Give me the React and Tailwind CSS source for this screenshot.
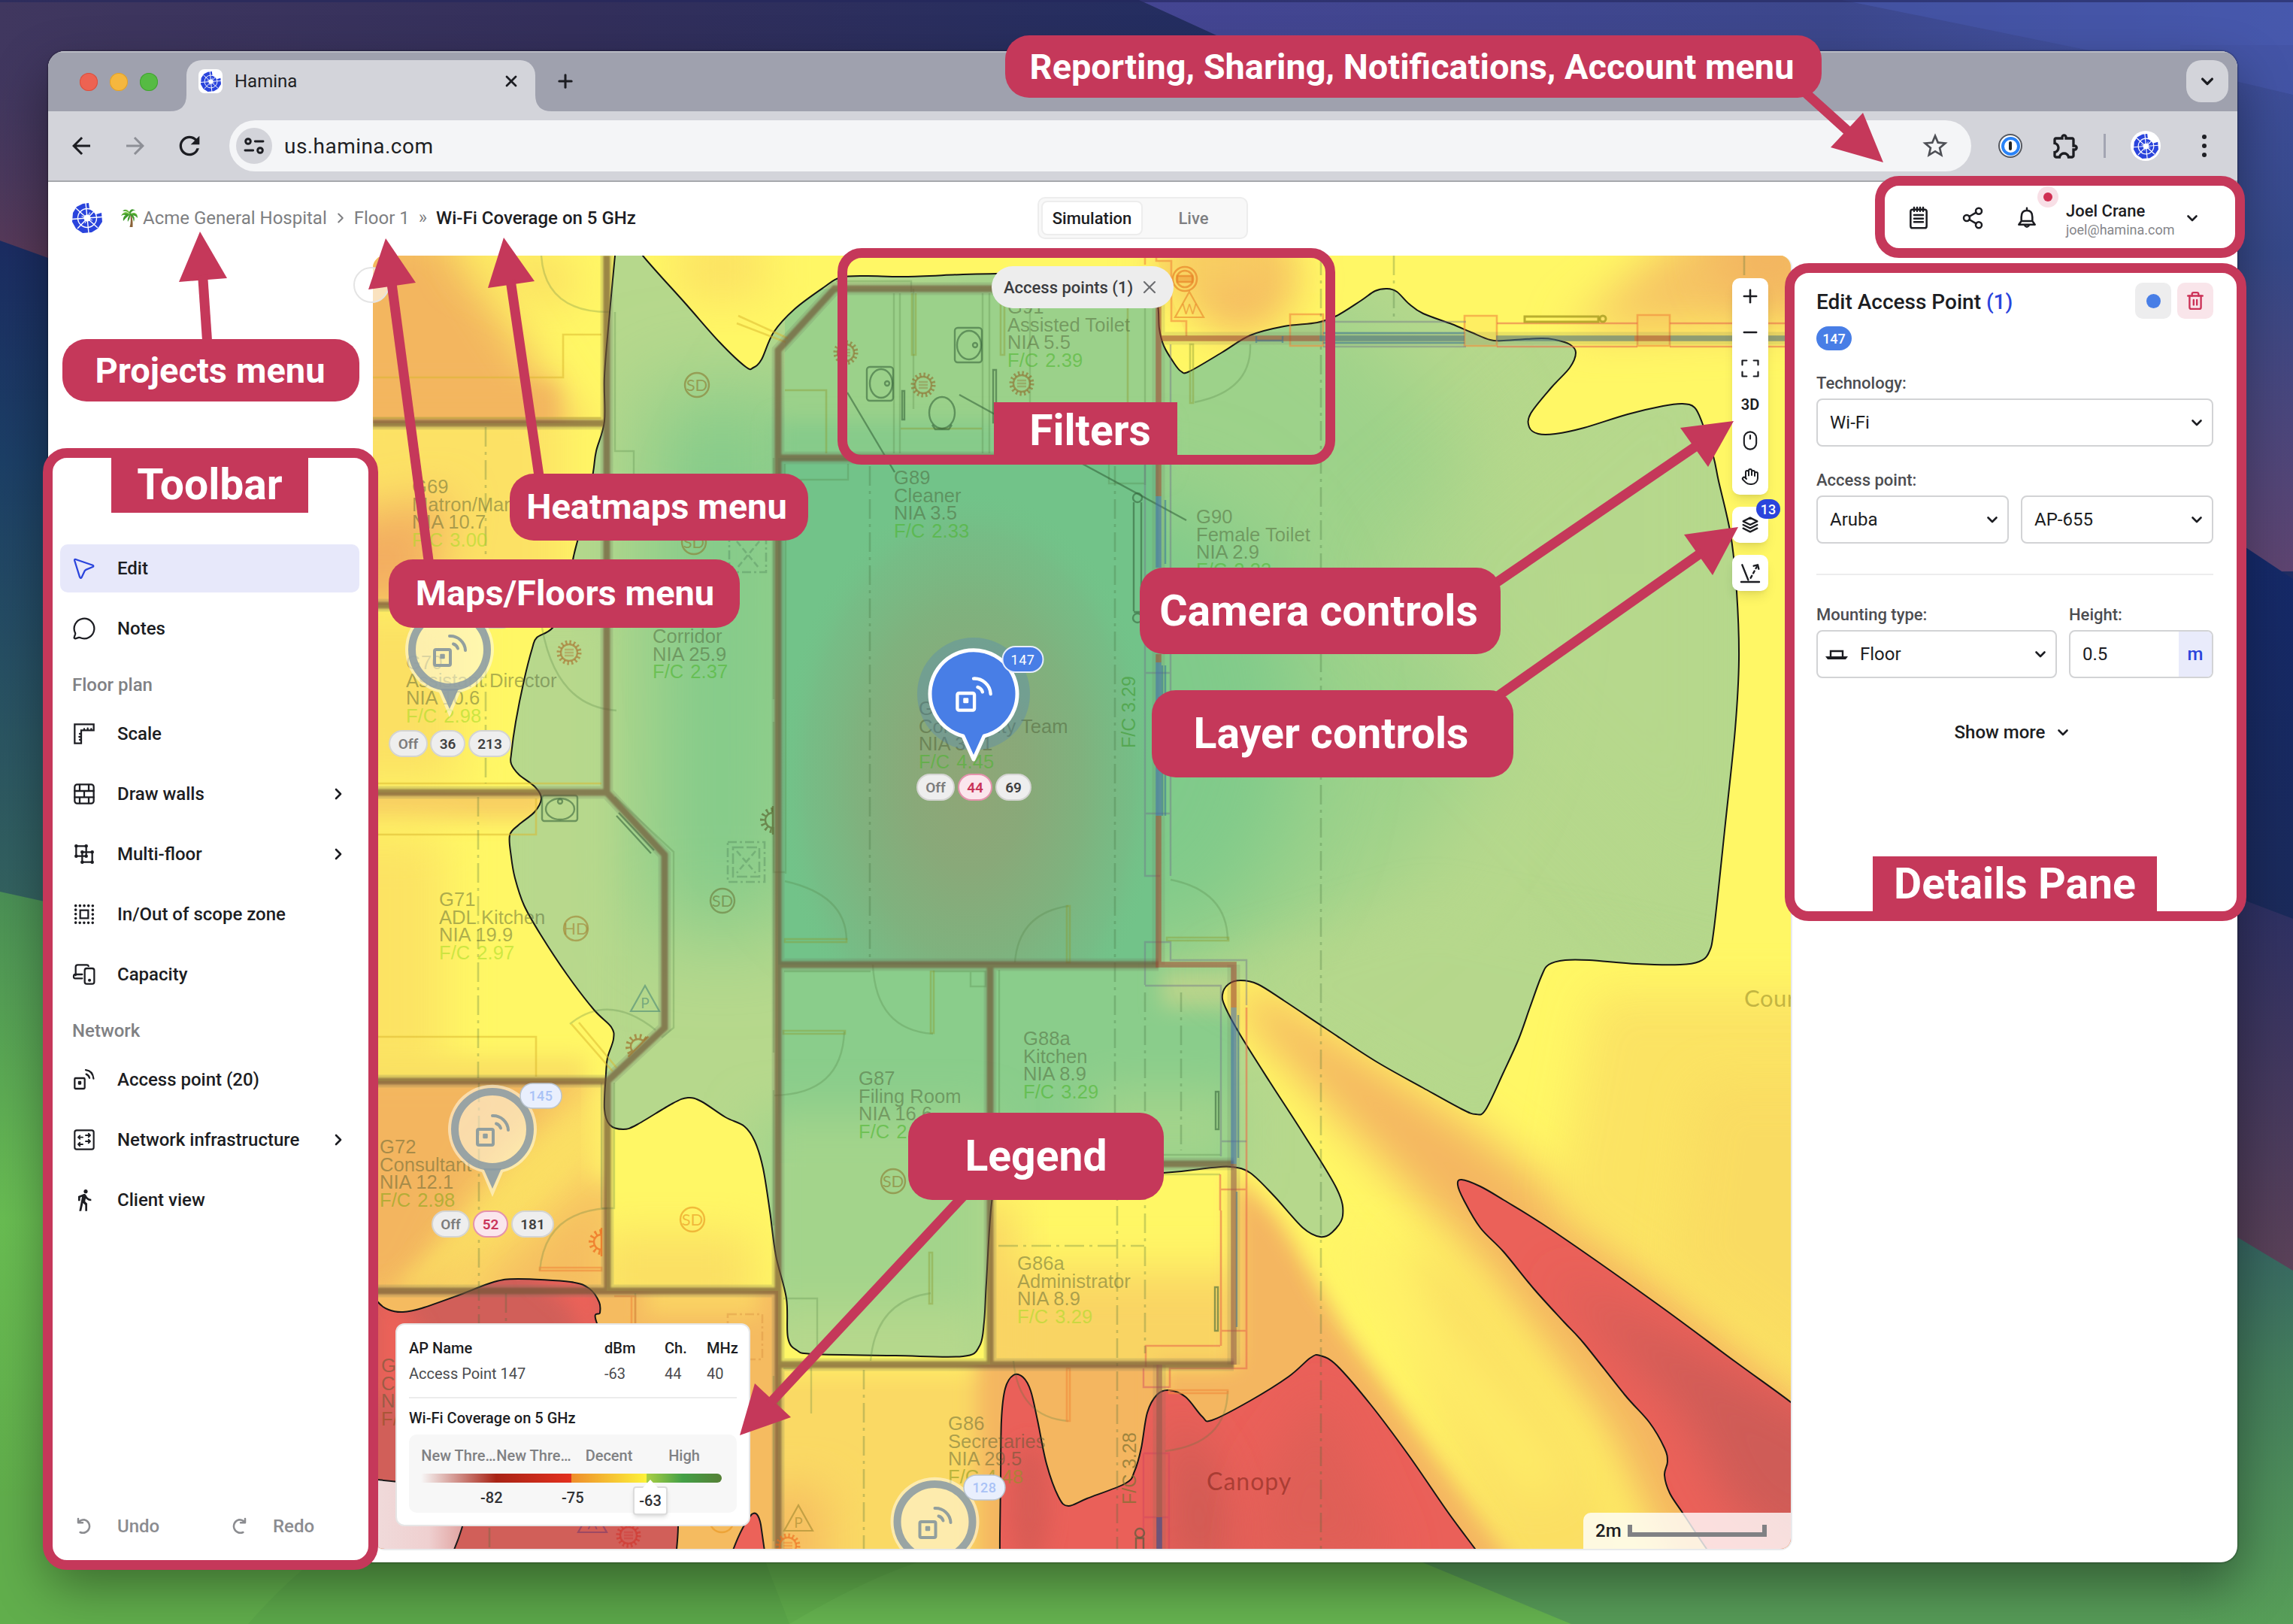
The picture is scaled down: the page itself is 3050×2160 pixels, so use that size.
import React from "react";
import { Plus, Minus, Mouse, Hand, Trash2, X, Share2, MessageCircle } from "lucide-react";
import { MdArrowBack, MdArrowForward, MdRefresh, MdStarOutline, MdOutlineExtension, MdDirectionsWalk } from "react-icons/md";
import { TbStack2 } from "react-icons/tb";

/* ---------- geometry helpers ---------- */

// Smooth curve through a list of points (Catmull-Rom converted to cubic Beziers).
function smooth(points, closed) {
  const n = points.length;
  const at = (i) => (closed ? points[(i + n) % n] : points[Math.max(0, Math.min(n - 1, i))]);
  let d = `M${points[0][0]} ${points[0][1]}`;
  const last = closed ? n : n - 1;
  for (let i = 0; i < last; i++) {
    const [p0, p1, p2, p3] = [at(i - 1), at(i), at(i + 1), at(i + 2)];
    const k = 6;
    d += `C${p1[0] + (p2[0] - p0[0]) / k} ${p1[1] + (p2[1] - p0[1]) / k} ${p2[0] - (p3[0] - p1[0]) / k} ${p2[1] - (p3[1] - p1[1]) / k} ${p2[0]} ${p2[1]}`;
  }
  return closed ? d + "Z" : d;
}

const GREEN = smooth(
  [
    [820, 310], [818, 340], [811, 415], [804, 500], [804, 560], [793, 600], [789, 628], [780, 680], [768, 720], [761, 750], [755, 800], [735, 835],
    [714, 848], [708, 862], [697, 905], [686, 960], [680, 1003], [680, 1016], [690, 1030], [712, 1047], [720, 1062], [711, 1080], [690, 1097],
    [678, 1111], [680, 1140], [685, 1168], [697, 1204], [719, 1243], [754, 1296], [790, 1343], [813, 1366], [816, 1382], [808, 1407], [806, 1429],
    [804, 1475], [811, 1496], [829, 1502], [847, 1496], [894, 1468], [915, 1460], [933, 1465], [965, 1486], [990, 1498], [1004, 1518],
    [1015, 1554], [1024, 1611], [1032, 1670], [1046, 1727], [1048, 1779], [1060, 1796], [1083, 1801], [1191, 1803], [1281, 1804], [1303, 1790],
    [1309, 1758], [1312, 1706], [1319, 1600], [1330, 1575], [1400, 1565], [1547, 1560], [1612, 1553], [1638, 1552], [1663, 1560], [1695, 1591],
    [1733, 1633], [1756, 1645], [1772, 1639], [1786, 1617], [1778, 1581], [1733, 1507], [1689, 1439], [1650, 1377], [1630, 1340], [1626, 1323],
    [1634, 1309], [1650, 1304], [1673, 1309], [1708, 1331], [1765, 1369], [1829, 1411], [1893, 1447], [1944, 1475], [1963, 1482],
    [1976, 1476], [2000, 1426], [2020, 1382], [2035, 1340], [2050, 1299], [2060, 1283], [2082, 1277], [2114, 1277], [2177, 1282], [2235, 1283],
    [2260, 1279], [2273, 1267], [2280, 1234], [2295, 1095], [2308, 970], [2313, 877], [2310, 787], [2302, 711], [2286, 640], [2279, 607],
    [2264, 562], [2254, 542], [2238, 537], [2212, 540], [2165, 551], [2107, 569], [2069, 577], [2046, 577], [2034, 568], [2036, 550], [2063, 516], [2088, 489],
    [2096, 469], [2088, 458], [2069, 452], [2050, 450], [2000, 453], [1982, 452], [1957, 442], [1931, 431], [1893, 417], [1874, 404],
    [1858, 388], [1845, 384], [1829, 387], [1810, 400], [1778, 420], [1752, 429], [1708, 434], [1663, 446], [1625, 469], [1582, 494], [1571, 494],
    [1561, 482], [1548, 460], [1542, 437], [1540, 406], [1530, 375], [1500, 366], [1400, 363], [1325, 364], [1281, 365], [1204, 368], [1153, 367],
    [1118, 369], [1096, 382], [1057, 411], [1029, 442], [1013, 478], [1002, 489], [992, 488], [957, 455], [912, 404], [855, 340], [836, 310],
  ],
  true
);

const RED_BOTTOM = smooth(
  [
    [1330, 2080], [1330, 2040], [1331, 1967], [1332, 1889], [1337, 1847], [1348, 1829], [1361, 1832], [1371, 1850], [1380, 1889], [1392, 1947], [1408, 1991],
    [1421, 2003], [1446, 1993], [1497, 1973], [1509, 1957], [1518, 1926], [1526, 1879], [1539, 1855], [1555, 1849], [1577, 1858], [1599, 1884],
    [1612, 1889], [1663, 1863], [1714, 1831], [1743, 1806], [1756, 1803], [1778, 1816], [1823, 1868], [1874, 1936], [1925, 2010], [1962, 2060], [1980, 2085],
  ],
  false
);

const RED_RIGHT = smooth(
  [
    [2290, 2085], [2270, 2060], [2238, 2012], [2221, 1986], [2214, 1962], [2218, 1944], [2214, 1926], [2194, 1892], [2161, 1855], [2107, 1787], [2080, 1758],
    [2040, 1714], [2000, 1665], [1969, 1633], [1947, 1596], [1939, 1576], [1944, 1569], [1969, 1578], [2000, 1596], [2067, 1638], [2201, 1732],
    [2308, 1811], [2382, 1865], [2410, 1890],
  ],
  false
);

const RED_LEFT = smooth(
  [
    [480, 1700], [502, 1731], [517, 1742], [536, 1745], [561, 1740], [612, 1722], [657, 1705], [689, 1701], [759, 1705], [784, 1714], [797, 1732],
    [798, 1746], [794, 1760], [840, 1860], [900, 1960], [902, 2030], [898, 2080],
  ],
  false
);

const Label = ({ x, y, lines, last, tint = "#4bb52c", op = 0.58 }) => (
  <g fontFamily="Liberation Sans, Arial, sans-serif" fontSize="25.600">
    {lines.map((l, i) => (
      <text key={i} x={x} y={y + i * 23.5} fill="#46562e" fillOpacity={0.46}>{l}</text>
    ))}
    {last && <text x={x} y={y + lines.length * 23.5} fill={tint} fillOpacity={op} wordSpacing="2">{last}</text>}
  </g>
);

const Detector = ({ x, y, t = "SD", c = "#8a7a30" }) => (
  <g stroke={c} fill="none" strokeOpacity="0.6" strokeWidth="2.4">
    <circle cx={x} cy={y} r="16" />
    <text x={x} y={y + 8} textAnchor="middle" fontSize="22" fontFamily="Lato, sans-serif" stroke="none" fill={c} fillOpacity="0.6">{t}</text>
  </g>
);

const Sun = ({ x, y, c = "#8f6b2c" }) => (
  <g stroke={c} strokeOpacity="0.6" fill="none" strokeWidth="2.4">
    <circle cx={x} cy={y} r="11" />
    <circle cx={x} cy={y} r="14" strokeWidth="5" strokeDasharray="2.4 3.1" />
    <path d={`M${x - 6} ${y - 4}h12M${x - 6} ${y}h12M${x - 6} ${y + 4}h12`} strokeOpacity="0.35" />
  </g>
);

// Wall-mounted variant: only the half that projects from the wall.
const HalfSun = ({ x, y, c, rot = 0 }) => (
  <g transform={`translate(${x} ${y}) rotate(${rot})`} stroke={c} strokeOpacity="0.7" fill="none" strokeWidth="2.4">
    <path d="M0 -19V19M0 -10A10 10 0 0 0 0 10" />
    <path d="M0 -14A14 14 0 0 0 0 14" strokeWidth="6" strokeDasharray="2.600 4" />
  </g>
);

const Warn = ({ x, y, t, c }) => (
  <g stroke={c} fill="none" strokeWidth="2.2" strokeOpacity="0.6">
    <path d={`M${x} ${y - 20}L${x + 19} ${y + 14}H${x - 19}Z`} />
    <text x={x} y={y + 10} textAnchor="middle" fontSize="19" fontFamily="Lato, sans-serif" fill={c} fillOpacity="0.6" stroke="none">{t}</text>
  </g>
);

const ApGlyph = ({ x, y, s = 1, c }) => (
  <g transform={`translate(${x} ${y}) scale(${s})`} fill="none" stroke={c} strokeWidth="4" strokeLinecap="round" strokeLinejoin="round">
    <rect x="-20" y="0" width="21" height="21" rx="2" />
    <rect x="-11.500" y="7" width="4" height="4" fill={c} strokeWidth="2.500" />
    <path d="M5 -7.500a9 9 0 0 1 6 6" />
    <path d="M0 -18a20 20 0 0 1 21 19" />
  </g>
);

const Pin = ({ x, y }) => (
  <g>
    <path d={`M${x - 14} ${y + 57}A59 59 0 1 1 ${x + 14} ${y + 57}L${x} ${y + 90}Z`} fill="#fffae6" fillOpacity="0.56" />
    <circle cx={x} cy={y} r="50" fill="none" stroke="#8b9ba3" strokeWidth="10" strokeOpacity="0.88" />
    <path d={`M${x - 12} ${y + 52}L${x} ${y + 79}L${x + 12} ${y + 52}Z`} fill="#8b9ba3" fillOpacity="0.9" />
    <ApGlyph x={x} y={y} c="#929f9e" />
  </g>
);

const Chip = ({ x, y, w, t, pink, muted }) => (
  <g>
    <rect x={x} y={y} width={w} height="34" rx="17" fill={pink ? "#fbe6ed" : "#eeeeee"} stroke={pink ? "#e592ad" : "#d4d4d2"} strokeWidth="2" />
    <text x={x + w / 2} y={y + 23.5} textAnchor="middle" fontSize="19" fontWeight="600" fontFamily="Roboto, sans-serif" fill={pink ? "#c9345a" : muted ? "#7c7c7c" : "#3f3f3f"}>{t}</text>
  </g>
);

const Badge = ({ x, y, t }) => (
  <g>
    <rect x={x} y={y} width="55" height="33" rx="16.5" fill="#e9effd" stroke="#b9c4d0" strokeWidth="1.500" />
    <text x={x + 27.5} y={y + 23} textAnchor="middle" fontSize="18" fontWeight="500" letterSpacing="0.5" fontFamily="Roboto, sans-serif" fill="#a9c2f6">{t}</text>
  </g>
);

const WALLS = "M496 563H807M496 805H807M496 1054H807M807 340V1054L884 1137V1367L808 1438V1717M496 1438H808M496 1717H1035M1035 2060V466L1110 384H1541M1035 609H1541M1035 1283H1541M1317 1283V1815M1317 1548H1641M1035 1815H1641";
const YEL = "#a8dc28";

function Heatmap() {
  return (
    <svg className="block h-full w-full" viewBox="496 340 1886 1720" preserveAspectRatio="none">
      <defs>
        <filter id="b2" x="-5%" y="-5%" width="110%" height="110%"><feGaussianBlur stdDeviation="1.200" /></filter>
        <filter id="b15" x="-50%" y="-50%" width="200%" height="200%"><feGaussianBlur stdDeviation="14" /></filter>
        <filter id="b30" x="-50%" y="-50%" width="200%" height="200%"><feGaussianBlur stdDeviation="30" /></filter>
        <filter id="b60" x="-50%" y="-50%" width="200%" height="200%"><feGaussianBlur stdDeviation="60" /></filter>
        <clipPath id="cg"><path d={GREEN} /></clipPath>
        <clipPath id="c1"><rect x="496" y="340" width="311" height="223" /></clipPath>
        <clipPath id="c2"><rect x="496" y="563" width="311" height="242" /></clipPath>
        <clipPath id="c3"><rect x="496" y="1054" width="311" height="384" /></clipPath>
        <clipPath id="c4"><rect x="496" y="1438" width="311" height="279" /></clipPath>
        <clipPath id="c8"><rect x="807" y="1438" width="228" height="279" /></clipPath>
        <clipPath id="c5"><rect x="496" y="1717" width="539" height="343" /></clipPath>
        <clipPath id="c6"><rect x="1035" y="1815" width="506" height="245" /></clipPath>
        <clipPath id="c7"><rect x="1317" y="1548" width="324" height="267" /></clipPath>
        <clipPath id="croom"><rect x="1035" y="609" width="506" height="674" /></clipPath>
        <clipPath id="crl"><path d={RED_LEFT + "L480 2080Z"} /></clipPath>
        <clipPath id="crb"><path d={RED_BOTTOM + "Z"} /></clipPath>
        <clipPath id="crr"><path d={RED_RIGHT + "L2410 2085Z"} /></clipPath>
        <radialGradient id="hot">
          <stop offset="0" stopColor="#8fa677" />
          <stop offset="0.3" stopColor="#89a979" />
          <stop offset="0.6" stopColor="#7fb27e" />
          <stop offset="0.85" stopColor="#77bb85" stopOpacity="0.8" />
          <stop offset="1" stopColor="#72c389" stopOpacity="0" />
        </radialGradient>
        <linearGradient id="pink" x1="500" x2="640" y1="0" y2="0" gradientUnits="userSpaceOnUse">
          <stop offset="0" stopColor="#f0dada" />
          <stop offset="0.5" stopColor="#efd0d0" />
          <stop offset="1" stopColor="#d98c88" />
        </linearGradient>
      </defs>

      <rect x="496" y="340" width="1886" height="1720" fill="#fff765" />

      {/* weaker signal inside the yellow band */}
      <g clipPath="url(#c1)">
        <path d="M440 300H590L780 590H440Z" fill="#f3b65f" filter="url(#b30)" />
        <path d="M600 340H760V420Z" fill="#fadb62" filter="url(#b30)" />
        <rect x="440" y="510" width="300" height="80" fill="#f3b65f" filter="url(#b15)" />
      </g>
      <g clipPath="url(#c2)">
        <rect x="440" y="520" width="310" height="340" fill="#fce165" filter="url(#b30)" />
        <path d="M440 690L600 660L560 840H440Z" fill="#f3ae60" filter="url(#b30)" />
      </g>
      <rect x="440" y="810" width="170" height="230" fill="#fbe063" filter="url(#b30)" />
      <g clipPath="url(#c3)">
        <rect x="440" y="1030" width="290" height="60" fill="#f8cf62" filter="url(#b15)" />
        <rect x="420" y="1110" width="170" height="330" fill="#fce364" filter="url(#b30)" />
        <rect x="440" y="1405" width="340" height="60" fill="#fae062" filter="url(#b15)" />
      </g>
      <g clipPath="url(#c4)">
        <rect x="496" y="1438" width="311" height="279" fill="#fbdc64" />
        <path d="M420 1400H800L640 1580L560 1740H420Z" fill="#f3b55f" filter="url(#b30)" />
        <path d="M600 1740L820 1540V1760Z" fill="#f5bd60" filter="url(#b30)" />
        <path d="M810 1450V1520L560 1717H520L700 1530Z" fill="#fbe063" opacity="0.7" filter="url(#b15)" />
        <rect x="788" y="1438" width="30" height="130" fill="#fff168" filter="url(#b15)" />
      </g>
      <g clipPath="url(#c8)">
        <rect x="790" y="1640" width="215" height="110" fill="#fbdf63" filter="url(#b30)" />
      </g>
      <g clipPath="url(#c5)">
        <rect x="496" y="1717" width="539" height="343" fill="#f5bb60" />
        <rect x="860" y="1700" width="150" height="50" fill="#fad364" filter="url(#b15)" />
      </g>
      <g clipPath="url(#c6)">
        <rect x="1035" y="1815" width="506" height="245" fill="#fad964" />
        <path d="M1300 1780H1580V2120H1300Z" fill="#f4b660" filter="url(#b15)" />
        <rect x="1000" y="1980" width="100" height="140" fill="#f6bd60" filter="url(#b30)" />
        <rect x="1000" y="1790" width="290" height="40" fill="#ffec66" filter="url(#b15)" />
      </g>
      <g clipPath="url(#c7)">
        <rect x="1280" y="1690" width="400" height="200" fill="#f9d463" filter="url(#b30)" />
        <rect x="1260" y="1600" width="90" height="260" fill="#f9d463" filter="url(#b30)" />
      </g>
      {/* rays fanning out of the east wing */}
      <path d="M1640 1310L1700 1330L1960 1500L2440 1860V2120H2230L2130 1900L1930 1640L1660 1360Z" fill="#f4b660" filter="url(#b30)" />
      <path d="M2120 1320H2460V1900L2240 1720L2070 1610Z" fill="#fbe164" filter="url(#b30)" opacity="0.9" />
      <path d="M2260 1440H2480V1880L2230 1690Z" fill="#f9da62" filter="url(#b30)" opacity="0.8" />
      <path d="M1860 1640L1960 1700L2120 1930L2200 2120H2000L1900 1840Z" fill="#fbdf64" filter="url(#b30)" />
      <path d="M1642 1560L1700 1620L1790 1770L2020 2090H1541V1815H1642Z" fill="#f4b660" filter="url(#b15)" />
      <path d="M1790 1650L2060 1980" stroke="#fff067" strokeWidth="50" filter="url(#b30)" />
      {/* roof patches at the top */}
      <ellipse cx="1650" cy="372" rx="70" ry="70" fill="#f4b660" filter="url(#b30)" />
      <rect x="1545" y="300" width="150" height="90" fill="#f8cd62" filter="url(#b30)" />
      <path d="M2110 420L2270 280H2460V430L2080 440Z" fill="#f6c463" filter="url(#b30)" />
      <ellipse cx="2350" cy="345" rx="70" ry="55" fill="#f3b560" filter="url(#b30)" />
      <rect x="900" y="310" width="120" height="90" fill="#fce264" filter="url(#b30)" />

      {/* strong coverage */}
      <g clipPath="url(#cg)">
        <path d={GREEN} fill="#b6d88c" />
        <ellipse cx="1480" cy="820" rx="520" ry="500" fill="#9dd28a" filter="url(#b60)" />
        <rect x="860" y="520" width="200" height="720" fill="#84cb8a" filter="url(#b60)" />
        <ellipse cx="1530" cy="960" rx="200" ry="300" fill="#80ca8a" filter="url(#b60)" />
        <rect x="1044" y="384" width="497" height="225" fill="#9bd18a" />
        <rect x="1030" y="560" width="520" height="70" fill="#86cb8a" filter="url(#b15)" />
        <rect x="1035" y="1283" width="606" height="264" fill="#8acd8b" />
        <rect x="1000" y="1480" width="317" height="400" fill="#a3d48b" filter="url(#b30)" />
        <rect x="1000" y="1740" width="320" height="120" fill="#b6d88c" filter="url(#b30)" />
        <rect x="1450" y="1450" width="200" height="110" fill="#a3d48b" filter="url(#b30)" />
        <g clipPath="url(#croom)">
          <rect x="1035" y="609" width="506" height="674" fill="#72c389" />
          <ellipse cx="1289" cy="1040" rx="255" ry="390" fill="url(#hot)" />
        </g>
        <rect x="1545" y="1290" width="110" height="50" fill="#b9d48b" filter="url(#b15)" />
        <path d="M2290 340L1800 760L2330 1290L2330 500Z" fill="#b6d88c" opacity="0.7" filter="url(#b60)" />
        <path d="M1600 1290L1900 1200L2300 1290L1960 1500Z" fill="#b6d88c" opacity="0.6" filter="url(#b30)" />
        <rect x="680" y="830" width="130" height="560" fill="#b9d98d" opacity="0.6" filter="url(#b15)" />
      </g>

      {/* poor coverage */}
      <g>
        <g clipPath="url(#crl)">
          <path d={RED_LEFT + "L480 2080Z"} fill="#d15f59" />
          <path d="M500 1700L560 1770V1860H500ZM700 1690L800 1700V1860L760 1740Z" fill="#ec6259" filter="url(#b15)" />
          <path d="M502 1968L540 1972L620 2010Q614 2040 600 2070H480V1968Z" fill="url(#pink)" stroke="#1a1a1a" strokeWidth="2" />
        </g>
        <path d="M972 2070Q986 2030 1000 2014Q1008 2008 1012 2028L1018 2070Z" fill="#ec6259" stroke="#1a1a1a" strokeWidth="2" />
        <g clipPath="url(#crb)">
          <path d={RED_BOTTOM + "Z"} fill="#ea6059" />
          <ellipse cx="1370" cy="2000" rx="26" ry="80" fill="#d95c55" filter="url(#b15)" />
          <path d="M1560 1870L1620 1960L1640 2080H1560Z" fill="#cd5a52" filter="url(#b30)" />
          <path d="M1680 1960L1760 1850L1860 2080H1660Z" fill="#df5e57" filter="url(#b30)" />
        </g>
        <g clipPath="url(#crr)">
          <path d={RED_RIGHT + "L2410 2085Z"} fill="#eb6159" />
          <path d="M2060 1690L2440 1900V2110L2300 2000L2240 1880Z" fill="#cf5c57" filter="url(#b30)" />
        </g>
      </g>

      <g fill="none" stroke="#151515" strokeWidth="2">
        <path d={GREEN} />
        <path d={RED_BOTTOM} />
        <path d={RED_RIGHT} />
        <path d={RED_LEFT} />
      </g>

      {/* thin plan linework */}
      <g fill="none" stroke="#4f7a3c" strokeOpacity="0.26" strokeWidth="2.4">
        <path d="M818 415V600H843V630M1029 609V930M1029 960v200h16M1045 640v522M818 1060L896 1133V1367L880 1380" />
        <path d="M720 340Q725 415 810 415M1215 384v160M1370 384v160" strokeOpacity="0.25" />
        <path d="M1044 617v21h84v-21M1189 390V603M1197 390V603M1307 390V603M1316 390V603M1112 374h100v15" />
        <path d="M1475 617v26h48v-26M1523 390v255" />
        <path d="M1044 1172Q1125 1190 1126 1250M1350 1280Q1355 1215 1421 1205M1557 1170Q1632 1185 1633 1250M1161 1283Q1165 1370 1241 1375M1123 1372Q1120 1455 1030 1457" />
        <path d="M1043 1292h115M1241 1292h70v20h-20v-20M1329 1290V1536H1623M1329 1562H1623" />
        <path d="M1158 1810Q1165 1730 1238 1720M1042 1727h45v80M1042 1820h37v60M1348 1810Q1355 1885 1421 1890M1550 1930Q1632 1920 1633 1850" />
        <path d="M721 835Q740 940 820 945M758 1362Q810 1320 872 1370M718 1690Q725 1612 808 1607" />
        <path d="M800 1440V1607M817 1440V1607H800M1029 1100v300M1029 1450v180M1029 1830v220M845 1720v80h-30" />
        <path d="M1589 535Q1665 520 1663 458" />
      </g>
      <g fill="none" stroke="#d9b52c" strokeOpacity="0.5" strokeWidth="2.6">
        <path d="M496 502H749V445H800M496 556H800M496 1042H800M713 1062V1110H496M496 1379H713V1432" />
        <path d="M760 1362L815 1425M770 1360L820 1420M982 420L1048 450M980 430L1045 455" />
      </g>
      <g fill="none" stroke="#8a9a30" strokeOpacity="0.42" strokeWidth="2.6">
        <path d="M1044 519h55v84M1213 390v82h5v-82M1331 390v82h5v-82M1500 410v130M1198 570h108" />
        <path d="M1044 1249h82v4h-82zM1552 1247h82v4h-82zM1419 1205h4v75h-4zM1238 1292h4v82h-4zM1042 1371h82v4h-82zM1236 1666h4v68h-4zM1583 458h4v78h-4z" />
      </g>
      <g fill="none" stroke="#f08a3c" strokeOpacity="0.6" strokeWidth="2.6">
        <path d="M718 1686h82v4h-82zM1419 1820h4v70h-4zM1555 1849h78v4h-78zM817 1724h28v36M840 1724v36" />
        <path d="M1523 342V352M1538 342v5h20v80h20v20M1716 418h44v42h-44zM1948 420h43v40h-43zM2178 419h43v41h-43z" fill="#f08a3c" fillOpacity="0.08" />
        <path d="M1991 430H2178M2221 430H2382M1991 461H2178M2221 461H2382M1623 1562v48M1658 1340v480h-102v26M1624 1582h34M1624 1770h34M1623 1790H1524v28M1624 1610v180" stroke="#e8704c" />
      </g>
      <g fill="none" stroke="#70708a" strokeOpacity="0.42" strokeWidth="2.4">
        <path d="M1523 617V1165h20M1557 617V1165M1523 895h34M1523 1082h34M1523 1310v-57h34v24h101v60M1523 1311h101v227M1760 428h190M1760 461h190M1624 1518h34M1624 1340v178M1557 458v145" />
        <path d="M1521 1820v25h34M1521 1933h34v130M1521 1933v130M1521 2018h34" stroke="#d04060" />
      </g>
      <g fill="none" stroke="#3f6d38" strokeOpacity="0.27" strokeWidth="2.6" strokeDasharray="26 7 4 7">
        <path d="M646 568V1042M636 1060V1434M637 1440V1790M1157 620V1276M1483 620V1545M1757 340V2060M1523 1320V1530M1571 1320V1530M1149 1822V2060M1486 1560V2060M1523 1570V1800M673 1720v60M1328 1657H1522M651 2032v28M2320 340V370M1854 340v86" />
      </g>
      <g fill="none" stroke="#2f5c35" strokeOpacity="0.55" strokeWidth="2.4">
        <path d="M1127 522L1190 628M1276 525L1325 552M1440 617L1578 692" />
        <rect x="1153" y="488" width="35" height="45" rx="4" /><ellipse cx="1172" cy="510" rx="15" ry="19" />
        <rect x="1270" y="436" width="36" height="46" rx="4" /><ellipse cx="1289" cy="459" rx="16" ry="19" />
        <circle cx="1180" cy="510" r="3" /><circle cx="1297" cy="459" r="3" />
        <ellipse cx="1253" cy="549" rx="17" ry="21" /><path d="M1240 565l4 6h18l4-6M1200 520v38h3v-38zM1321 492v70h4v-70z" />
        <rect x="721" y="1058" width="47" height="34" rx="3" /><ellipse cx="745" cy="1076" rx="19" ry="14" /><circle cx="745" cy="1066" r="3" />
        <path d="M820 1085L866 1135M823 1081L870 1131" />
        <path d="M1508 668v145M1518 668v145M1508 814h10" /><circle cx="1513" cy="662" r="6" /><circle cx="1513" cy="822" r="6" />
        <rect x="1617" y="1452" width="4" height="50" /><rect x="1616" y="1712" width="4" height="58" /><path d="M1511 2060v-14h10v14" /><circle cx="1516" cy="2039" r="6" />
      </g>
      <g fill="none" stroke="#4c7f55" strokeOpacity="0.36" strokeWidth="2.6">
        <rect x="968" y="1120" width="49" height="53" strokeDasharray="12 4 3 4" /><rect x="975" y="1127" width="35" height="39" strokeDasharray="14 4" /><path d="M980 1132l25 29M1005 1132l-25 29" strokeDasharray="8 4" />
        <rect x="970" y="715" width="49" height="46" strokeDasharray="12 4 3 4" /><path d="M980 720l30 36M1010 720l-30 36" strokeDasharray="8 4" />
        <rect x="968" y="1748" width="46" height="60" strokeDasharray="12 4 3 4" stroke="#d58a3c" />
      </g>
      <g fill="none" stroke="#a89c20" strokeOpacity="0.8" strokeWidth="3">
        <rect x="2028" y="421" width="98" height="7" /><circle cx="2132" cy="424" r="4" />
      </g>

      {/* walls */}
      <g fill="none" stroke="#6f765e" strokeOpacity="0.2" strokeWidth="17">
        <path d={WALLS} />
        <path d="M1541 384V1283M1541 450H2382M1641 1283V1815M1542 1815V2060" strokeOpacity="0.16" />
      </g>
      <path d={WALLS} fill="none" stroke="#6d5233" strokeOpacity="0.62" strokeWidth="9" filter="url(#b2)" />
      <g fill="none" strokeWidth="7.500" strokeOpacity="0.55">
        <path d="M1541 384V660M1541 870V881M1541 1085V1283H1641V1340M1541 450H1755M2174 450h48" stroke="#a04632" />
        <path d="M1541 660V755M1541 881V1085M1641 1340V1548" stroke="#3f6cae" />
        <path d="M1641 1548V1815M1542 1815V2060" stroke="#8f5a4a" />
        <path d="M1755 450H1948M1990 450H2174M2222 450H2382" stroke="#4a6f80" />
        <path d="M1542 2018V2060" stroke="#3a4c9a" />
      </g>
      <g fill="none" stroke="#2f6d9a" strokeOpacity="0.5" strokeWidth="2.4">
        <path d="M1760 443h188M1760 456h188M1550 665v85M1550 885v200M1546 885v200M1647 1350v190M1645 1585v180M1671 447v9M1706 447v9M1671 453h35" />
      </g>

      <Label x={548} y={656} lines={["G69", "Matron/Man", "NIA 10.7"]} last="F/C 3.00" tint={YEL} />
      <Label x={540} y={890} lines={["G70", "Assistant Director", "NIA 10.6"]} last="F/C 2.98" tint={YEL} />
      <Label x={868} y={855} lines={["Corridor", "NIA 25.9"]} last="F/C 2.37" />
      <Label x={584} y={1205} lines={["G71", "ADL Kitchen", "NIA 19.9"]} last="F/C 2.97" tint={YEL} />
      <Label x={505} y={1534} lines={["G72", "Consultant", "NIA 12.1"]} last="F/C 2.98" tint="#90a820" op={0.65} />
      <Label x={507} y={1825} lines={["G73", "Consultant", "NIA 12.1"]} last="F/C 2.98" tint="#8a5020" />
      <Label x={1340} y={417} lines={["G91", "Assisted Toilet", "NIA 5.5"]} last="F/C 2.39" />
      <Label x={1189} y={644} lines={["G89", "Cleaner", "NIA 3.5"]} last="F/C 2.33" />
      <Label x={1591} y={696} lines={["G90", "Female Toilet", "NIA 2.9"]} last="F/C 2.33" />
      <Label x={1222} y={951} lines={["G88", "Community Team", "NIA 31.1"]} last="F/C 4.45" />
      <Label x={1142} y={1443} lines={["G87", "Filing Room", "NIA 16.6"]} last="F/C 2.33" />
      <Label x={1361} y={1390} lines={["G88a", "Kitchen", "NIA 8.9"]} last="F/C 3.29" />
      <Label x={1353} y={1689} lines={["G86a", "Administrator", "NIA 8.9"]} last="F/C 3.29" tint={YEL} />
      <Label x={1261} y={1902} lines={["G86", "Secretaries", "NIA 29.5"]} last="F/C 4.48" tint="#8a9a20" />
      <g fontFamily="Liberation Sans, sans-serif" fontSize="25">
        <text transform="translate(1510 995) rotate(-90)" fill="#3f9a30" fillOpacity="0.6">F/C 3.29</text>
        <text transform="translate(1511 2001) rotate(-90)" fill="#7a7030" fillOpacity="0.7">F/C 3.28</text>
      </g>
      <text x="1605" y="1982" fontSize="32" letterSpacing="1" fontFamily="Lato, sans-serif" fill="#8a2a20" fillOpacity="0.65">Canopy</text>
      <text x="2320" y="1339" fontSize="31" letterSpacing="0.500" fontFamily="Lato, sans-serif" fill="#8a8020" fillOpacity="0.5">Cour</text>

      <Detector x={927} y={512} /><Detector x={923} y={721} /><Detector x={961} y={1198} c="#6a7a3a" /><Detector x={1188} y={1571} />
      <Detector x={921} y={1622} c="#e8941e" /><Detector x={766} y={1235} t="HD" c="#a08030" /><Detector x={960} y={2022} c="#e8941e" />
      <Sun x={757} y={868} c="#a86a28" /><Sun x={1228} y={512} /><Sun x={1359} y={510} /><Sun x={1125} y={469} />
      <HalfSun x={849} y={1392} c="#a0702c" rot={45} /><HalfSun x={1028} y={1091} c="#5c6b34" /><HalfSun x={800} y={1652} c="#ee6a1c" />
      <Sun x={836} y={2042} c="#d0322c" /><Sun x={1048} y={2056} c="#ee6a1c" />
      <Warn x={858} y={1331} t="P" c="#4d8a74" /><Warn x={1062} y={2022} t="P" c="#a08830" /><Warn x={1582} y={408} t="W" c="#e8862a" /><Warn x={788} y={2024} t="A" c="#7a3a6a" />
      <g fill="none" stroke="#e8862a" strokeOpacity="0.7" strokeWidth="2.6"><circle cx="1576" cy="371" r="16" /><circle cx="1576" cy="371" r="11" /><path d="M1566 367h20v8h-20z" fill="#e8862a" fillOpacity="0.4" /></g>

      {/* access points */}
      <Badge x={630} y={802} t="146" />
      <Pin x={598} y={864} /><Pin x={655} y={1502} /><Pin x={1243.5} y={2024} />
      <Badge x={692} y={1441} t="145" /><Badge x={1282} y={1962} t="128" />
      <circle cx="1295" cy="923" r="75" fill="#4a80c4" fillOpacity="0.3" />
      <path d="M1281 979A58 58 0 1 1 1309 979L1295 1010Z" fill="#487ee6" stroke="#ffffff" strokeWidth="5" strokeLinejoin="round" />
      <ApGlyph x={1295} y={922} s={1.08} c="#ffffff" />
      <rect x="1333.500" y="860" width="54" height="34" rx="17" fill="#487ee6" stroke="#e6edfb" strokeWidth="2" />
      <text x="1360.500" y="883.500" textAnchor="middle" fontSize="18" letterSpacing="0.5" fontFamily="Roboto, sans-serif" fill="#ffffff">147</text>
      <Chip x={518} y={972} w={50} t="Off" muted /><Chip x={573} y={972} w={45} t="36" /><Chip x={624} y={972} w={55} t="213" />
      <Chip x={575} y={1611} w={49} t="Off" muted /><Chip x={630} y={1611} w={45} t="52" pink /><Chip x={681} y={1611} w={55} t="181" />
      <Chip x={1220} y={1030} w={49} t="Off" muted /><Chip x={1275} y={1030} w={44} t="44" pink /><Chip x={1325} y={1030} w={46} t="69" />
    </svg>
  );
}

/* ---------- small drawings ---------- */

const Logo = ({ className }) => (
  <svg viewBox="0 0 40 40" className={className}>
    <path d="M14 1L22 0L23 8L29 11.5L32 15L39 13L40 25L34 34L26 39L14 40L5 34L0 25L1 13L6 5Z" fill="#2a44dc" />
    <g stroke="#fff" fill="none" strokeWidth="1.400">
      <circle cx="20" cy="20" r="12.500" />
      <path d="M18 0L22 40M0 21.500L40 18.500M5 7L34 33M33 7L7 34" />
      <path d="M12.500 17.500L27 23M17 27L23.500 12.500" strokeWidth="1" />
    </g>
    <circle cx="20" cy="20" r="4.600" fill="#fff" />
  </svg>
);

const Palm = () => (
  <svg viewBox="0 0 24 26" className="h-[26px] w-6">
    <path d="M13 8Q15 16 12.500 25H16.500Q17 15 14.500 8Z" fill="#8a6238" />
    <path d="M13 8Q6 2 1 10Q5 8 7 9Q3 12 4 17Q8 12 12 9Q9 14 10 18Q13 14 13.500 9Q17 12 18 18Q20 13 17 9.500Q20 9 23 13Q23 4 13.500 7Q17 1 21 4Q15 -2 12 5Q7 -1 3 4Q9 3 13 8Z" fill="#3f9a2c" />
    <path d="M12 8Q7 4 3 8M15 8Q19 5 22 9M12 6Q9 2 6 3" stroke="#76c442" strokeWidth="1.200" fill="none" />
  </svg>
);

const Svg = ({ children, className = "size-8", sw = 1.7 }) => (
  <svg viewBox="0 0 24 24" fill="none" stroke="currentColor" strokeWidth={sw} strokeLinecap="round" strokeLinejoin="round" className={className}>{children}</svg>
);
const Chevron = ({ dir = "down", className = "size-6", sw = 2.6 }) => (
  <Svg className={className} sw={sw}><path d={dir === "down" ? "M6.500 9.500l5.500 5.500 5.500-5.500" : "M9 6l6 6-6 6"} /></Svg>
);

const ICONS = {
  edit: <Svg><path d="M3.500 3Q2 2.500 2.500 4.500L7.500 20.500Q8.300 22.500 9.500 20.800L12.500 14.500Q13 13.600 14 13.200L20.500 10.500Q22 9.700 20.500 8.800Z" /></Svg>,
  notes: <MessageCircle className="size-8" strokeWidth={1.7} />,
  scale: <Svg><path d="M2.500 2.500H21.500V8.500H9V21.500H2.500ZM9 8.500V21.500M12 8.500V7M15.500 8.500V6.500M19 8.500V7M9 12H7.500M9 15H7M9 18H7.500" strokeLinejoin="miter" /></Svg>,
  walls: <Svg><rect x="2.500" y="2.500" width="19" height="19" rx="2.500" /><path d="M2.500 9H21.500M2.500 15.300H21.500M7.500 3V9M16.500 3V9M12 9V15.300M7.500 15.300V21M16.500 15.300V21" /></Svg>,
  multi: <Svg><path d="M4 4H14V14H4ZM10 10H20V20H10Z" strokeLinejoin="miter" /><g fill="currentColor" strokeWidth="1"><circle cx="4" cy="4" r="1.200" /><circle cx="14" cy="4" r="1.200" /><circle cx="4" cy="14" r="1.200" /><circle cx="14" cy="14" r="1.200" /><circle cx="10" cy="10" r="1.200" /><circle cx="20" cy="10" r="1.200" /><circle cx="10" cy="20" r="1.200" /><circle cx="20" cy="20" r="1.200" /></g></Svg>,
  scope: <Svg><rect x="8" y="8" width="8" height="8" strokeLinejoin="miter" /><path d="M3.500 3.500H20.500V20.500H3.500Z" strokeWidth="2.700" strokeDasharray="0.010 4.250" /></Svg>,
  capacity: <Svg><path d="M3.500 13V4.500Q3.500 2.500 5.500 2.500H14.500Q16 2.500 16.300 3.700M10 12H3Q1.500 12 1.500 14V14.500Q1.500 16 3 16H10" /><rect x="12.500" y="6" width="9.500" height="15.500" rx="2" /><circle cx="17.300" cy="17.800" r="0.700" fill="currentColor" /></Svg>,
  ap: <Svg><rect x="2.500" y="10.500" width="10" height="10.500" rx="1" /><rect x="6.700" y="14.200" width="1.600" height="2" fill="currentColor" /><path d="M14 6.500Q16.500 7.500 17.300 10.300M13.500 2.300Q20.500 3 21.300 11" /></Svg>,
  infra: <Svg sw={1.6}><rect x="2.500" y="2.500" width="19" height="19" rx="2" /><path d="M13.500 7.500H18M16.300 5.800L18 7.500L16.300 9.200M10.500 9.500H6M7.700 7.800L6 9.500L7.700 11.200M13.500 13.500H18M16.300 11.800L18 13.500L16.300 15.200M10.500 16.500H6M7.700 14.800L6 16.500L7.700 18.200" strokeWidth="1.400" /></Svg>,
  client: <MdDirectionsWalk className="size-8" />,
};

const NavItem = ({ icon, label, active, arrow }) => (
  <div className={"flex h-16 items-center rounded-[10px] pl-4 pr-4 " + (active ? "bg-[#e7e8fa]" : "")}>
    <span className={"flex w-8 shrink-0 " + (active ? "text-[#2a44dc]" : "text-[#1c1d22]")}>{ICONS[icon]}</span>
    <span className="ml-7 flex-1 whitespace-nowrap text-[24px] font-medium">{label}</span>
    {arrow && <Chevron dir="right" className="size-6" sw={2.6} />}
  </div>
);

const Select = ({ children, className = "" }) => (
  <div className={"flex h-16 items-center justify-between rounded-[8px] border-2 border-[#d2d3d5] bg-white pl-4 pr-2 text-[24px] " + className}>
    <span className="flex items-center gap-4">{children}</span>
    <Chevron className="size-6" />
  </div>
);

/* ---------- browser chrome ---------- */

function TabStrip() {
  return (
    <div className="flex h-20 bg-[#9fa1ae] pl-[42px] pr-3 shadow-[inset_0_2px_0_#b9bbc4]">
      <div className="flex h-full items-center gap-4 pt-0.5">
        <span className="size-6 rounded-full bg-[#ed6352] ring-1 ring-[#d8503f] ring-inset" />
        <span className="size-6 rounded-full bg-[#f5b73e] ring-1 ring-[#dd9f2c] ring-inset" />
        <span className="size-6 rounded-full bg-[#56bb43] ring-1 ring-[#43a232] ring-inset" />
      </div>
      <svg viewBox="0 0 22 22" className="ml-4 size-[22px] self-end"><path d="M22 0Q22 22 0 22H22Z" fill="#d3d4da" /></svg>
      <div className="mt-3 flex w-[464px] items-center rounded-t-[20px] bg-[#d3d4da] pb-3 pl-4 pr-5">
        <span className="flex size-8 items-center justify-center rounded-[8px] bg-white"><Logo className="size-[27px]" /></span>
        <span className="ml-4 flex-1 text-[24px] text-[#1e1f24]">Hamina</span>
        <X className="size-6" strokeWidth={2.8} />
      </div>
      <svg viewBox="0 0 22 22" className="size-[22px] self-end"><path d="M0 0Q0 22 22 22H0Z" fill="#d3d4da" /></svg>
      <div className="ml-1 flex flex-1 items-center"><Plus className="size-7" strokeWidth={2.6} /></div>
      <div className="mt-3 flex size-14 items-center justify-center rounded-[20px] bg-[#d3d4da]"><Chevron className="size-7" sw={2.8} /></div>
    </div>
  );
}

function AddressBar() {
  return (
    <div className="flex h-[94px] items-center border-b-2 border-[#a6a8ad] bg-[#d3d4da] pl-6 pr-7">
      <MdArrowBack className="size-10 shrink-0 p-0.5" />
      <MdArrowForward className="ml-8 size-10 shrink-0 p-0.5 text-[#8d8f96]" />
      <MdRefresh className="ml-8 size-10 shrink-0" />
      <div className="ml-[33px] flex h-[68px] w-[2317px] items-center rounded-full bg-[#f4f5f7] pl-[9px] pr-[28px]">
        <span className="flex size-12 items-center justify-center rounded-full bg-[#d3d4da]">
          <Svg className="size-8" sw={2.2}><circle cx="6" cy="7.500" r="2.500" /><path d="M13 7.500h8M3 16.500h8" /><circle cx="18" cy="16.500" r="2.500" /></Svg>
        </span>
        <span className="ml-4 flex-1 pt-0.5 text-[28px] tracking-[0.45px] text-[#1e1f24]">us.hamina.com</span>
        <MdStarOutline className="size-10 text-[#4e5056]" />
      </div>
      <span className="ml-9 flex size-8 items-center justify-center rounded-full border-2 border-[#55585f] bg-white">
        <span className="flex size-[25px] items-center justify-center rounded-full border-4 border-[#2a83f7] bg-white"><span className="h-3 w-1 rounded-sm bg-[#222]" /></span>
      </span>
      <MdOutlineExtension className="ml-[38px] size-10 shrink-0" />
      <span className="ml-[30px] h-8 w-[3px] bg-[#a3a5b2]" />
      <span className="ml-[33px] flex size-10 items-center justify-center rounded-full bg-white"><Logo className="size-[33px]" /></span>
      <span className="ml-auto mr-[13px] flex flex-col gap-1.5">
        <i className="size-[6px] rounded-full bg-[#1e1f24]" /><i className="size-[6px] rounded-full bg-[#1e1f24]" /><i className="size-[6px] rounded-full bg-[#1e1f24]" />
      </span>
    </div>
  );
}

function AppHeader() {
  return (
    <div className="flex h-[98px] items-center pb-0.5 pl-8 pr-[48px]">
      <div className="flex w-[1284px] items-center text-[24px] text-[#7e7f82]">
        <Logo className="size-10" />
        <span className="ml-6 mr-1.5"><Palm /></span>
        <span className="text-[24px] whitespace-nowrap">Acme General Hospital</span>
        <span className="mx-[7px] flex"><Chevron dir="right" className="size-[22px]" sw={2.2} /></span>
        <span>Floor 1</span>
        <span className="mx-3 pb-0.5">»</span>
        <span className="whitespace-nowrap font-medium text-[#1c1d22]">Wi-Fi Coverage on 5 GHz</span>
      </div>
      <div className="flex h-14 w-[280px] items-center rounded-[10px] border-2 border-[#ededed] bg-[#f8f8f8] p-[3px] text-[22px] font-medium">
        <span className="flex h-[46px] w-[135px] items-center justify-center rounded-[8px] border-2 border-[#ededed] bg-white">Simulation</span>
        <span className="flex-1 text-center text-[#7e7f82]">Live</span>
      </div>
      <div className="ml-auto flex items-center">
        <Svg className="mr-10 size-8" sw={1.9}><rect x="4" y="3.500" width="16" height="18.500" rx="2" /><path d="M7.500 1.500v3.500M10.500 1.500v3.500M13.500 1.500v3.500M16.500 1.500v3.500M7.500 9h9M7.500 12.500h9M7.500 16h9" /></Svg>
        <Share2 className="mr-10 size-8" strokeWidth={1.9} />
        <span className="relative mr-[36px] flex">
          <Svg className="size-8" sw={1.9}><path d="M12 2V4.500M12 4.500Q6.500 4.500 6.500 11V15L4 18.500H20L17.500 15V11Q17.500 4.500 12 4.500ZM6.500 15H17.500M10 19.500Q12 22 14 19.500" /></Svg>
          <span className="absolute -top-[26px] left-[30px] flex size-7 items-center justify-center rounded-full bg-[#f8dfe6]"><span className="size-3 rounded-full bg-[#cf2f52]" /></span>
        </span>
        <div className="w-[144px] pt-1 leading-none">
          <div className="text-[22px] font-medium leading-[26px]">Joel Crane</div>
          <div className="mt-px text-[18px] leading-[22px] text-[#85868a]">joel@hamina.com</div>
        </div>
        <Chevron className="ml-3 size-6" />
      </div>
    </div>
  );
}

/* ---------- panels ---------- */

function Sidebar() {
  return (
    <div className="flex w-[432px] shrink-0 flex-col pl-4 pr-[18px] pb-4 pt-[384px]">
      <div className="flex flex-col gap-4">
        <NavItem icon="edit" label="Edit" active />
        <NavItem icon="notes" label="Notes" />
      </div>
      <div className="mt-7 mb-[18px] h-[30px] pl-4 text-[24px] font-medium leading-[30px] text-[#808184]">Floor plan</div>
      <div className="flex flex-col gap-4">
        <NavItem icon="scale" label="Scale" />
        <NavItem icon="walls" label="Draw walls" arrow />
        <NavItem icon="multi" label="Multi-floor" arrow />
        <NavItem icon="scope" label="In/Out of scope zone" />
        <NavItem icon="capacity" label="Capacity" />
      </div>
      <div className="mt-7 mb-[18px] h-[30px] pl-4 text-[24px] font-medium leading-[30px] text-[#808184]">Network</div>
      <div className="flex flex-col gap-4">
        <NavItem icon="ap" label="Access point (20)" />
        <NavItem icon="infra" label="Network infrastructure" arrow />
        <NavItem icon="client" label="Client view" />
      </div>
      <div className="mt-auto flex h-16 items-center pl-4 text-[24px] font-medium text-[#8b8c90]">
        <Svg className="size-8" sw={1.9}><path d="M6 4.500V8.500H10.500M6.300 8.300Q8.500 5.500 12 5.500A6.600 6.600 0 1 1 8 18" /></Svg>
        <span className="ml-7 w-[146px]">Undo</span>
        <Svg className="size-8" sw={1.9}><path d="M18 4.500V8.500H13.500M17.700 8.300Q15.500 5.500 12 5.500A6.600 6.600 0 1 0 16 18" /></Svg>
        <span className="ml-[29px]">Redo</span>
      </div>
    </div>
  );
}

function MapControls() {
  const cell = "flex size-12 items-center justify-center";
  return (
    <div className="absolute left-[1808px] top-[30px] flex flex-col gap-4">
      <div className="flex flex-col rounded-[10px] bg-white shadow-lg">
        <span className={cell}><Plus className="size-7" strokeWidth={2.2} /></span>
        <span className={cell}><Minus className="size-7" strokeWidth={2.2} /></span>
        <span className={cell}><Svg className="size-7" sw={1.9}><path d="M3 8V3H8M16 3H21V8M21 16V21H16M8 21H3V16" /></Svg></span>
        <span className={cell + " text-[20px] font-semibold"}>3D</span>
        <span className={cell}><Mouse className="size-7" strokeWidth={1.8} /></span>
        <span className={cell}><Hand className="size-6" strokeWidth={2} /></span>
      </div>
      <div className={cell + " relative rounded-[10px] bg-white shadow-lg"}>
        <TbStack2 className="size-7" />
        <span className="absolute -right-4 -top-[10px] flex h-[26px] w-8 items-center justify-center rounded-full bg-[#2a44dc] text-[18px] font-medium text-white">13</span>
      </div>
      <div className={cell + " rounded-[10px] bg-white shadow-lg"}>
        <Svg className="size-8" sw={1.800}><path d="M3 21H21M4 4L10 19" /><path d="M12.500 17L18.500 6" strokeDasharray="2.400 3" /><path d="M15.500 5L19.500 4L20.500 8" /></Svg>
      </div>
    </div>
  );
}

function LegendCard() {
  return (
    <div className="absolute left-[30px] top-[1420px] h-[270px] w-[472px] rounded-[12px] border-2 border-[#e6e6e6] bg-white px-4 pt-[18px] text-[20px] leading-[26px]">
      <div className="grid grid-cols-[260px_80px_56px_auto] font-medium"><span>AP Name</span><span>dBm</span><span>Ch.</span><span>MHz</span></div>
      <div className="mt-2 grid grid-cols-[260px_80px_56px_auto] text-[#4a4b4e]"><span>Access Point 147</span><span>-63</span><span>44</span><span>40</span></div>
      <div className="mt-[18px] h-0.5 bg-[#ececec]" />
      <div className="mt-[13px] font-medium">Wi-Fi Coverage on 5 GHz</div>
      <div className="relative mt-[9px] h-[104px] rounded-[10px] bg-[#f7f7f7] pl-4 pr-5 pt-[15px]">
        <div className="grid grid-cols-4 whitespace-nowrap text-center font-medium text-[#808184]"><span>New Thre…</span><span>New Thre…</span><span>Decent</span><span>High</span></div>
        <div className="mt-[11px] h-3 rounded-r-full bg-[linear-gradient(90deg,#f7f7f7_0%,#a82315_25%,#e3301e_49.9%,#ee8d2b_50%,#fdf23a_74.9%,#a9cf45_75%,#43a047_87%,#558036_100%)]" />
        <div className="relative mt-[7px] h-[26px] font-medium text-[#303134]">
          <span className="absolute left-[79px]">-82</span><span className="absolute left-[187px]">-75</span>
          <span className="absolute left-[282px] -top-[2px] flex h-[38px] w-[46px] items-center justify-center rounded-[4px] border-2 border-[#dcdcdc] bg-white shadow-md">-63</span>
          <svg viewBox="0 0 22 12" className="absolute -top-[11px] left-[294px] h-3 w-[22px]"><path d="M0 12L11 0L22 12Z" fill="#fff" /></svg>
        </div>
      </div>
    </div>
  );
}

function MapPane() {
  return (
    <div className="relative h-[1722px] w-[1888px] shrink-0">
      <div className="h-full w-full overflow-hidden rounded-[16px] border-r-2 border-b-2 border-[#e9eaec]"><Heatmap /></div>
      <div className="absolute -left-[26px] top-[15px] size-12 rounded-full border-2 border-[#e4e4e4] bg-white/60" />
      <div className="absolute left-[823px] top-[14px] flex h-14 w-[242px] items-center justify-between rounded-[28px] bg-[#ededed] pl-4 pr-[18px] text-[22px] font-medium text-[#3b3c40]">
        <span className="whitespace-nowrap">Access points (1)</span><X className="size-7 text-[#6c6d70]" strokeWidth={1.8} />
      </div>
      <MapControls />
      <LegendCard />
      <div className="absolute bottom-[2px] right-[2px] flex h-12 w-[276px] items-center rounded-br-[14px] rounded-tl-[10px] bg-white/80 pl-4 text-[24px] font-medium">
        2m<span className="ml-2 h-4 w-[185px] border-x-[6px] border-b-[6px] border-[#808184]" />
      </div>
    </div>
  );
}

function DetailsPane() {
  const label = "text-[22px] font-medium leading-[26px] text-[#4c4d51]";
  return (
    <div className="flex flex-1 flex-col pl-8 pr-8 pt-9">
      <div className="flex h-12 items-center">
        <span className="flex-1 pt-[3px] text-[28px] font-medium">Edit Access Point <span className="text-[#2a44dc]">(1)</span></span>
        <span className="flex size-12 items-center justify-center rounded-[10px] bg-[#ededee]"><span className="size-[19px] rounded-full bg-[#487ee6]" /></span>
        <span className="ml-2 flex size-12 items-center justify-center rounded-[10px] bg-[#f9e5ea] text-[#cc3358]"><Trash2 className="size-[26px]" strokeWidth={2.2} /></span>
      </div>
      <span className="mt-[10px] flex h-8 w-[47px] items-center justify-center rounded-full bg-[#487ee6] text-[18px] font-medium text-white">147</span>
      <div className={"mt-[31px] " + label}>Technology:</div>
      <Select className="mt-[7px]">Wi-Fi</Select>
      <div className={"mt-8 " + label}>Access point:</div>
      <div className="mt-[7px] grid grid-cols-2 gap-4"><Select>Aruba</Select><Select>AP-655</Select></div>
      <div className="mt-10 h-0.5 bg-[#ececed]" />
      <div className="mt-10 grid grid-cols-[320px_192px] gap-4">
        <div>
          <div className={label}>Mounting type:</div>
          <Select className="mt-[7px]">
            <svg viewBox="0 0 30 20" className="-ml-1.5 h-5 w-[30px]"><path d="M7 14V6H23V14" fill="none" stroke="currentColor" strokeWidth="2.400" /><path d="M0 13H30L27 17H3Z" fill="currentColor" /></svg>
            Floor
          </Select>
        </div>
        <div>
          <div className={label}>Height:</div>
          <div className="mt-[7px] flex h-16 overflow-hidden rounded-[8px] border-2 border-[#d2d3d5] text-[24px]">
            <span className="flex flex-1 items-center pl-4">0.5</span>
            <span className="flex w-11 items-center justify-center bg-[#e9ebfb] font-medium text-[#2a44dc]">m</span>
          </div>
        </div>
      </div>
      <div className="mt-[54px] flex items-center justify-center gap-3 pr-1 text-[24px] font-medium">Show more <Chevron className="size-6" /></div>
    </div>
  );
}

/* ---------- call-outs ---------- */

const pill = "absolute flex items-center justify-center whitespace-nowrap rounded-[32px] bg-[#c5385a] font-bold text-white";
const frame = "absolute rounded-[32px] border-[13px] border-[#c5385a]";
const tag = "absolute flex items-center justify-center whitespace-nowrap bg-[#c5385a] font-bold text-white";

function Arrow({ tip, left, right, end }) {
  const mx = (left[0] + right[0]) / 2;
  const my = (left[1] + right[1]) / 2;
  return (
    <g>
      <path d={`M${tip}L${left}L${right}Z`} fill="#c5385a" />
      <path d={`M${mx + (tip[0] - mx) * 0.1} ${my + (tip[1] - my) * 0.1}L${end}`} stroke="#c5385a" strokeWidth="13" />
    </g>
  );
}

function Callouts() {
  return (
    <div className="absolute inset-0">
      <svg className="absolute inset-0 h-full w-full" viewBox="0 0 3050 2160">
        <Arrow tip={[266, 308]} left={[238, 375]} right={[302, 370]} end={[276, 460]} />
        <Arrow tip={[513, 317]} left={[490, 385]} right={[553, 376]} end={[572, 760]} />
        <Arrow tip={[670, 316]} left={[649, 383]} right={[711, 374]} end={[718, 640]} />
        <Arrow tip={[2505, 216]} left={[2478, 150]} right={[2435, 196]} end={[2400, 122]} />
        <Arrow tip={[2306, 560]} left={[2235, 569]} right={[2272, 621]} end={[1980, 782]} />
        <Arrow tip={[2312, 701]} left={[2240, 711]} right={[2278, 765]} end={[1985, 931]} />
        <Arrow tip={[984, 1909]} left={[1004, 1840]} right={[1052, 1885]} end={[1282, 1590]} />
      </svg>
      <div className={frame + " left-[57px] top-[596px] h-[1492px] w-[446px]"} />
      <div className={frame + " left-[2494px] top-[234px] h-[109px] w-[492px]"} />
      <div className={frame + " left-[1114px] top-[330px] h-[288px] w-[662px]"} />
      <div className={frame + " left-[2374px] top-[350px] h-[875px] w-[614px]"} />
      <div className={tag + " left-[148px] top-[605px] h-[77px] w-[262px] pt-0.5 text-[57px]"}>Toolbar</div>
      <div className={tag + " left-[1322px] top-[535px] h-[74px] w-[244px] pl-3 pt-px text-[57px]"}>Filters</div>
      <div className={tag + " left-[2491px] top-[1139px] h-[76px] w-[378px] pb-0.5 text-[57.2px]"}>Details Pane</div>
      <div className={pill + " left-[83px] top-[451px] h-[83px] w-[395px] pr-0.5 pt-0.5 text-[47px]"}>Projects menu</div>
      <div className={pill + " left-[1337px] top-[47px] h-[83px] w-[1086px] pr-1 pt-0.5 text-[46.9px]"}>Reporting, Sharing, Notifications, Account menu</div>
      <div className={pill + " left-[678px] top-[630px] h-[89px] w-[397px] pr-1.5 pb-px text-[47px]"}>Heatmaps menu</div>
      <div className={pill + " left-[517px] top-[744px] h-[91px] w-[467px] pl-0.5 text-[47px]"}>Maps/Floors menu</div>
      <div className={pill + " left-[1516px] top-[755px] h-[115px] w-[480px] pr-1 text-[57.2px]"}>Camera controls</div>
      <div className={pill + " left-[1532px] top-[918px] h-[116px] w-[481px] pr-1 text-[57.2px]"}>Layer controls</div>
      <div className={pill + " left-[1208px] top-[1480px] h-[116px] w-[340px] text-[57px]"}>Legend</div>
    </div>
  );
}

function Wallpaper() {
  return (
    <svg className="absolute inset-0 h-full w-full" viewBox="0 0 3050 2160" preserveAspectRatio="none">
      <defs>
        <linearGradient id="wt" x1="0" x2="1" y1="0" y2="0"><stop offset="0" stopColor="#40375f" /><stop offset="0.25" stopColor="#332f5b" /><stop offset="0.6" stopColor="#1f2d62" /></linearGradient>
        <linearGradient id="wl" x1="0" x2="0" y1="0" y2="1"><stop offset="0" stopColor="#40375f" stopOpacity="0" /><stop offset="1" stopColor="#5c3a58" /></linearGradient>
        <linearGradient id="wn" x1="0" x2="0" y1="0" y2="1"><stop offset="0" stopColor="#1b2c62" /><stop offset="0.3" stopColor="#1c3f66" /><stop offset="1" stopColor="#37685e" /></linearGradient>
        <linearGradient id="wp" x1="0" x2="1" y1="0" y2="0"><stop offset="0" stopColor="#444592" /><stop offset="0.6" stopColor="#3c478c" /><stop offset="1" stopColor="#4658ac" /></linearGradient>
        <linearGradient id="wr" x1="0" x2="0" y1="0" y2="1"><stop offset="0" stopColor="#3f4f9c" /><stop offset="0.4" stopColor="#364888" /><stop offset="1" stopColor="#5e4470" /></linearGradient>
        <linearGradient id="wr2" x1="0" x2="0" y1="0" y2="1"><stop offset="0" stopColor="#14296a" /><stop offset="1" stopColor="#1b2a5a" /></linearGradient>
        <linearGradient id="wr3" x1="0" x2="0" y1="0" y2="1"><stop offset="0" stopColor="#2a2f64" /><stop offset="1" stopColor="#5c4258" /></linearGradient>
        <linearGradient id="wg" x1="0" x2="0" y1="0" y2="1"><stop offset="0" stopColor="#4a8f55" /><stop offset="0.45" stopColor="#69bd52" /><stop offset="1" stopColor="#5da748" /></linearGradient>
        <linearGradient id="wg2" x1="0" x2="0" y1="0" y2="1"><stop offset="0" stopColor="#336064" /><stop offset="0.4" stopColor="#447d5c" /><stop offset="1" stopColor="#579e58" /></linearGradient>
      </defs>
      <rect width="3050" height="2160" fill="url(#wt)" />
      <rect y="40" width="400" height="320" fill="url(#wl)" />
      <path d="M0 320L200 392V1300H0Z" fill="url(#wn)" />
      <path d="M1515 0L1800 130H3050V0Z" fill="url(#wp)" />
      <rect x="2900" y="60" width="150" height="700" fill="url(#wr)" />
      <path d="M2450 0H3050V126L2940 100Z" fill="#4759ae" opacity="0.6" />
      <path d="M2900 670L3050 770V1230H2900Z" fill="url(#wr2)" />
      <path d="M2900 1165L3050 1222V1700H2900Z" fill="url(#wr3)" />
      <path d="M0 1186L200 1230V2160H0Z" fill="url(#wg)" />
      <rect x="0" y="1990" width="3050" height="170" fill="#61ae4c" />
      <path d="M330 2160Q400 2080 480 2030H1000L1050 2160Z" fill="#5ca84a" />
      <path d="M1050 2160Q1200 2070 1300 2060H1880L2100 2160Z" fill="#66b450" />
      <path d="M1800 2040L2090 2160H3050V1990H1800Z" fill="#579c58" />
      <path d="M2900 1600L3050 1690V2160H2900Z" fill="url(#wg2)" />
      <rect width="3050" height="3" fill="#23265c" opacity="0.6" />
    </svg>
  );
}

export default function App() {
  return (
    <div className="relative h-[2160px] w-[3050px] overflow-hidden pl-16 pt-[68px] font-['Roboto',sans-serif] text-[#1c1d22]">
      <Wallpaper />
      <div className="relative flex h-[2010px] w-[2912px] flex-col overflow-hidden rounded-[22px] bg-white shadow-[0_30px_70px_rgba(0,0,0,0.4),0_0_2px_1px_rgba(0,0,0,0.3)]">
        <TabStrip />
        <AddressBar />
        <AppHeader />
        <div className="flex flex-1">
          <Sidebar />
          <MapPane />
          <DetailsPane />
        </div>
      </div>
      <Callouts />
    </div>
  );
}
